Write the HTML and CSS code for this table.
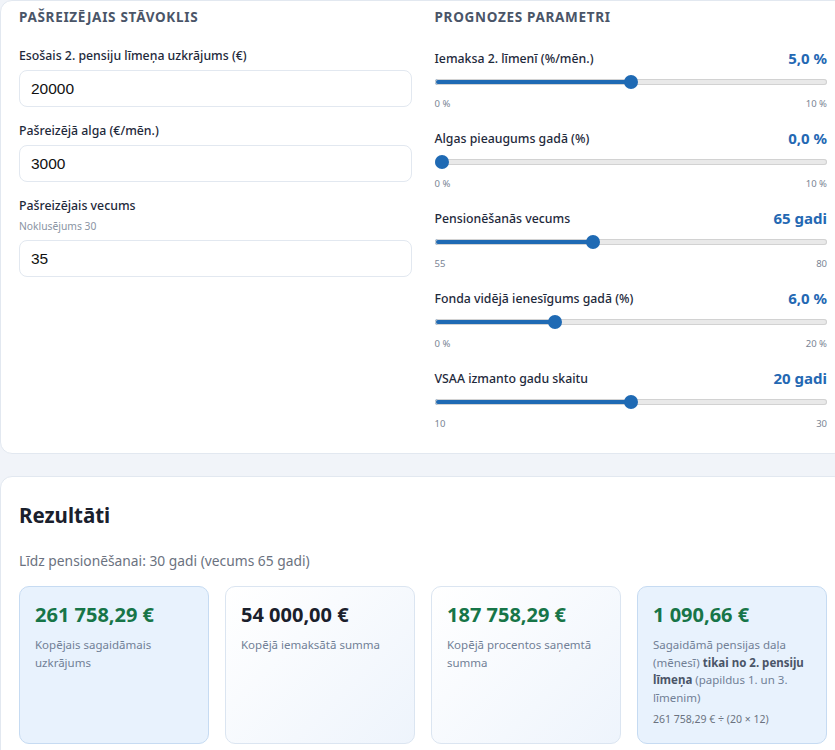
FILE: index.html
```html
<!DOCTYPE html>
<html lang="lv">
<head>
<meta charset="utf-8">
<title>Pensiju kalkulators</title>
<link rel="stylesheet" href="styles.css">
</head>
<body>
<div class="page">
  <section class="card inputs-card">
    <div class="col">
      <h2 class="col-title">Pašreizējais stāvoklis</h2>
      <div class="field">
        <label class="field-label" for="savings">Esošais 2. pensiju līmeņa uzkrājums (€)</label>
        <input class="text-input" id="savings" type="text" value="20000">
      </div>
      <div class="field">
        <label class="field-label" for="salary">Pašreizējā alga (€/mēn.)</label>
        <input class="text-input" id="salary" type="text" value="3000">
      </div>
      <div class="field">
        <label class="field-label" for="age">Pašreizējais vecums</label>
        <div class="hint">Noklusējums 30</div>
        <input class="text-input" id="age" type="text" value="35">
      </div>
    </div>
    <div class="col">
      <h2 class="col-title">Prognozes parametri</h2>
      <div class="slider-row">
        <div class="slider-head"><span class="slider-label">Iemaksa 2. līmenī (%/mēn.)</span><span class="slider-value">5,0 %</span></div>
        <input class="range" type="range" min="0" max="10" step="0.5" value="5" style="--p:0.5">
        <div class="range-limits"><span>0 %</span><span>10 %</span></div>
      </div>
      <div class="slider-row">
        <div class="slider-head"><span class="slider-label">Algas pieaugums gadā (%)</span><span class="slider-value">0,0 %</span></div>
        <input class="range" type="range" min="0" max="10" step="0.5" value="0" style="--p:0">
        <div class="range-limits"><span>0 %</span><span>10 %</span></div>
      </div>
      <div class="slider-row">
        <div class="slider-head"><span class="slider-label">Pensionēšanās vecums</span><span class="slider-value">65 gadi</span></div>
        <input class="range" type="range" min="55" max="80" step="1" value="65" style="--p:0.4">
        <div class="range-limits"><span>55</span><span>80</span></div>
      </div>
      <div class="slider-row">
        <div class="slider-head"><span class="slider-label">Fonda vidējā ienesīgums gadā (%)</span><span class="slider-value">6,0 %</span></div>
        <input class="range" type="range" min="0" max="20" step="0.5" value="6" style="--p:0.3">
        <div class="range-limits"><span>0 %</span><span>20 %</span></div>
      </div>
      <div class="slider-row">
        <div class="slider-head"><span class="slider-label">VSAA izmanto gadu skaitu</span><span class="slider-value">20 gadi</span></div>
        <input class="range" type="range" min="10" max="30" step="1" value="20" style="--p:0.5">
        <div class="range-limits"><span>10</span><span>30</span></div>
      </div>
    </div>
  </section>

  <section class="card results-card">
    <h1 class="results-title">Rezultāti</h1>
    <p class="results-sub">Līdz pensionēšanai: 30 gadi (vecums 65 gadi)</p>
    <div class="result-grid">
      <div class="result result-accent">
        <div class="result-value green">261 758,29 €</div>
        <div class="result-desc">Kopējais sagaidāmais uzkrājums</div>
      </div>
      <div class="result result-plain">
        <div class="result-value dark">54 000,00 €</div>
        <div class="result-desc">Kopējā iemaksātā summa</div>
      </div>
      <div class="result result-plain">
        <div class="result-value green">187 758,29 €</div>
        <div class="result-desc">Kopējā procentos saņemtā summa</div>
      </div>
      <div class="result result-accent">
        <div class="result-value green">1 090,66 €</div>
        <div class="result-desc">Sagaidāmā pensijas daļa (mēnesī) <strong>tikai no 2. pensiju līmeņa</strong> (papildus 1. un 3. līmenim)</div>
        <div class="result-formula">261 758,29 € ÷ (20 × 12)</div>
      </div>
    </div>
  </section>
</div>
</body>
</html>
```

FILE: styles.css
```css
* { box-sizing: border-box; }

html, body {
  margin: 0;
  padding: 0;
  background: #f1f4f9;
  overflow: hidden;
}

body {
  font-family: "Segoe UI", "Noto Sans", "Open Sans", sans-serif;
  color: #1e293b;
}

.page {
  width: 846px;
  display: flex;
  flex-direction: column;
  gap: 22px;
}

.card {
  background: #ffffff;
  border: 1px solid #e2e8f0;
  border-radius: 12px;
}

/* ---------- inputs card ---------- */
.inputs-card {
  display: grid;
  grid-template-columns: 1fr 1fr;
  column-gap: 23px;
  padding: 6px 18px 22px 18px;
}

.col-title {
  margin: 0;
  font-size: 13.5px;
  line-height: 20px;
  font-weight: 700;
  letter-spacing: 0.7px;
  text-transform: uppercase;
  color: #4a5568;
}

.field {
  display: flex;
  flex-direction: column;
  margin-top: 14px;
}
.col > .field:first-of-type { margin-top: 19px; }

.field-label {
  font-size: 12.3px;
  line-height: 20px;
  font-weight: 500;
  color: #1e293b;
}

.hint {
  margin-top: 3px;
  font-size: 10.3px;
  line-height: 14px;
  color: #8a94a3;
}

.text-input {
  margin-top: 4px;
  height: 37px;
  width: 100%;
  padding: 0 11px;
  border: 1px solid #e2e8f0;
  border-radius: 8px;
  font-family: "Liberation Sans", Arial, sans-serif;
  font-size: 15.5px;
  color: #111;
  background: #fff;
  outline: none;
}
.hint + .text-input { margin-top: 7px; }

/* ---------- sliders ---------- */
.slider-row { margin-top: 17px; }
.col > .slider-row:first-of-type { margin-top: 21px; }

.slider-head {
  display: flex;
  justify-content: space-between;
  align-items: center;
  height: 20px;
}
.slider-label {
  font-size: 12.3px;
  font-weight: 500;
  color: #1e293b;
}
.slider-value {
  font-size: 15px;
  font-weight: 700;
  color: #2468b3;
}

.range {
  -webkit-appearance: none;
  appearance: none;
  display: block;
  width: 100%;
  height: 14px;
  margin: 7px 0 0 0;
  padding: 0;
  background: transparent;
}
.range::-webkit-slider-runnable-track {
  height: 6px;
  border-radius: 3px;
  background: linear-gradient(to right, #1f6ab4 calc(7px + var(--p) * (100% - 14px)), #e9e9e9 0);
  box-shadow: inset 0 0 0 1px #d2d2d2;
}
.range::-webkit-slider-thumb {
  -webkit-appearance: none;
  appearance: none;
  width: 14px;
  height: 14px;
  margin-top: -4px;
  border-radius: 50%;
  background: #1f6ab4;
  border: none;
}

.range-limits {
  display: flex;
  justify-content: space-between;
  margin-top: 8px;
  font-size: 9.5px;
  line-height: 14px;
  color: #7a8494;
}

/* ---------- results ---------- */
.results-card {
  padding: 24px 18px 20px 18px;
  border-bottom-left-radius: 0;
  border-bottom-right-radius: 0;
}

.results-title {
  margin: 0;
  font-size: 20.5px;
  line-height: 28px;
  font-weight: 700;
  color: #1a202c;
}

.results-sub {
  margin: 21px 0 0 0;
  font-size: 13.8px;
  line-height: 22px;
  color: #6b7280;
}

.result-grid {
  margin-top: 14px;
  display: grid;
  grid-template-columns: repeat(4, 190px);
  gap: 16px;
}

.result {
  border-radius: 10px;
  padding: 15px 15px 16px 15px;
  min-height: 157px;
}
.result-accent {
  background: #e8f2fd;
  border: 1px solid #c6dbf2;
}
.result-plain {
  background: linear-gradient(135deg, #ffffff 0%, #eef4fc 100%);
  border: 1px solid #dbe5f1;
}

.result-value {
  font-size: 20px;
  line-height: 26px;
  font-weight: 700;
}
.result-value.green { color: #177548; }
.result-value.dark { color: #1a202c; }

.result-desc {
  margin-top: 8px;
  font-size: 11.5px;
  line-height: 17.7px;
  color: #718096;
}
.result-desc strong {
  color: #4a5568;
  font-weight: 700;
}

.result-formula {
  margin-top: 5px;
  font-size: 10.5px;
  line-height: 15px;
  color: #6b7280;
}
```
